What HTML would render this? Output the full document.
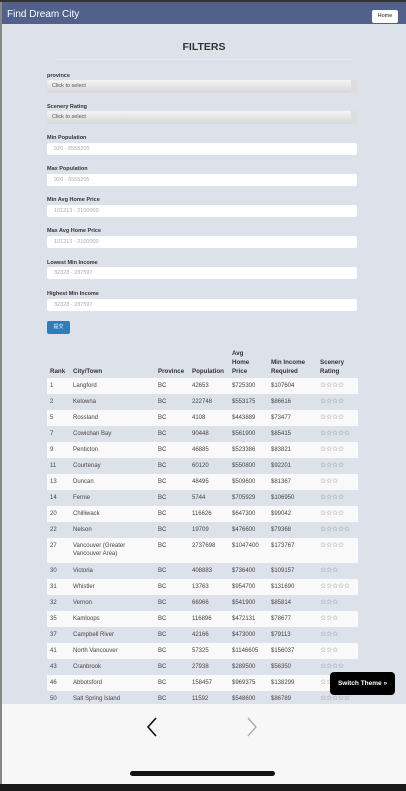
<!DOCTYPE html>
<html><head><meta charset="utf-8"><style>
*{box-sizing:border-box;margin:0;padding:0}
body{width:406px;height:791px;overflow:hidden;background:#1a1a1a;font-family:"Liberation Sans",Arial,sans-serif;position:relative}
.frame{position:absolute;left:0;top:0;width:406px;height:784px;background:#f7f7f7;border-left:2px solid #888;}
.top{position:absolute;left:0;top:0;width:406px;height:2px;background:#333}
.nav{position:absolute;left:2px;top:2px;width:404px;height:22px;background:#52618b;}
.nav .t{position:absolute;left:5px;top:7px;color:#fff;font-size:10px}
.nav .h{position:absolute;left:370px;top:8px;width:26px;height:13px;background:#fff;border-radius:2px;font-size:5.5px;text-align:center;line-height:13px;color:#222}
.content{position:absolute;left:2px;top:24px;width:404px;height:680px;background:#dde1ea;overflow:hidden}
h1{position:absolute;left:0;width:404px;top:17px;text-align:center;font-size:10.5px;font-weight:bold;color:#333}
.hr{position:absolute;left:54px;width:296px;top:35px;border-top:1px solid #e9ecf2}
.lab{position:absolute;left:45px;font-size:5.5px;font-weight:bold;color:#333}
.sel{position:absolute;left:45px;width:310px;height:13px;background:linear-gradient(#f4f4f4,#d6d6d6);border-radius:2px;font-size:5.5px;color:#555;padding:3px 0 0 5px}
.sel:after{content:"";position:absolute;right:0;top:0;width:6px;height:13px;background:#ddd}
.inp{position:absolute;left:45px;width:310px;height:12px;background:#fff;border-radius:2px;font-size:5.5px;color:#aaa;padding:3px 0 0 7px}
.btn{position:absolute;left:45px;top:297px;width:23px;height:13px;background:#337ab7;border-radius:2px;color:#dfe;font-size:5px;text-align:center;line-height:13px}
table{position:absolute;left:45px;top:325px;width:311px;border-collapse:collapse;font-size:6px;color:#444}
th{font-weight:bold;text-align:left;vertical-align:bottom;color:#333;padding:0 3px 2px 3px;line-height:9px;font-size:6.2px}
td{padding:0 3px;height:16px;vertical-align:middle;line-height:8px}
tr.o td{background:#f9f9f9}
.st{color:#777;letter-spacing:-.3px;font-size:7px}
.sw{position:absolute;left:330px;top:672px;width:65px;height:23px;background:#000;border-radius:4px;color:#fff;font-size:6.5px;font-weight:bold;text-align:center;line-height:23px}
.bar{position:absolute;left:130px;top:771px;width:145px;height:5px;background:#111;border-radius:3px}
</style></head><body>
<div class="frame"></div><div class="top"></div>
<div class="nav"><div class="t">Find Dream City</div><div class="h">Home</div></div>
<div class="content">
<h1>FILTERS</h1><div class="hr"></div>
<div class="lab" style="top:49px">province</div><div class="sel" style="top:56px">Click to select</div>
<div class="lab" style="top:80px">Scenery Rating</div><div class="sel" style="top:87px">Click to select</div>
<div class="lab" style="top:111px">Min Population</div><div class="inp" style="top:119px">920 - 6555205</div>
<div class="lab" style="top:142px">Max Population</div><div class="inp" style="top:150px">920 - 6555205</div>
<div class="lab" style="top:173px">Min Avg Home Price</div><div class="inp" style="top:181px">101213 - 2100000</div>
<div class="lab" style="top:204px">Max Avg Home Price</div><div class="inp" style="top:212px">101213 - 2100000</div>
<div class="lab" style="top:236px">Lowest Min Income</div><div class="inp" style="top:243px">32328 - 287597</div>
<div class="lab" style="top:267px">Highest Min Income</div><div class="inp" style="top:275px">32328 - 287597</div>
<div class="btn">提交</div>
<table>
<tr><th style="width:23px">Rank</th><th style="width:85px">City/Town</th><th style="width:34px">Province</th><th style="width:40px">Population</th><th style="width:39px">Avg<br>Home<br>Price</th><th style="width:49px">Min Income<br>Required</th><th>Scenery<br>Rating</th></tr>
<tr class="o"><td>1</td><td>Langford</td><td>BC</td><td>42653</td><td>$725300</td><td>$107604</td><td class="st">☆☆☆☆</td></tr>
<tr><td>2</td><td>Kelowna</td><td>BC</td><td>222748</td><td>$553175</td><td>$86616</td><td class="st">☆☆☆☆</td></tr>
<tr class="o"><td>5</td><td>Rossland</td><td>BC</td><td>4108</td><td>$443889</td><td>$73477</td><td class="st">☆☆☆☆</td></tr>
<tr><td>7</td><td>Cowichan Bay</td><td>BC</td><td>90448</td><td>$561900</td><td>$85415</td><td class="st">☆☆☆☆☆</td></tr>
<tr class="o"><td>9</td><td>Penticton</td><td>BC</td><td>46885</td><td>$523386</td><td>$83821</td><td class="st">☆☆☆☆</td></tr>
<tr><td>11</td><td>Courtenay</td><td>BC</td><td>60120</td><td>$550800</td><td>$92201</td><td class="st">☆☆☆☆</td></tr>
<tr class="o"><td>13</td><td>Duncan</td><td>BC</td><td>48495</td><td>$509600</td><td>$81367</td><td class="st">☆☆☆</td></tr>
<tr><td>14</td><td>Fernie</td><td>BC</td><td>5744</td><td>$705929</td><td>$106950</td><td class="st">☆☆☆☆</td></tr>
<tr class="o"><td>20</td><td>Chilliwack</td><td>BC</td><td>116626</td><td>$647300</td><td>$99042</td><td class="st">☆☆☆☆</td></tr>
<tr><td>22</td><td>Nelson</td><td>BC</td><td>19709</td><td>$476600</td><td>$79368</td><td class="st">☆☆☆☆☆</td></tr>
<tr class="o"><td style="height:25px;vertical-align:top;padding-top:4px">27</td><td style="vertical-align:top;padding-top:4px">Vancouver (Greater Vancouver Area)</td><td style="vertical-align:top;padding-top:4px">BC</td><td style="vertical-align:top;padding-top:4px">2737698</td><td style="vertical-align:top;padding-top:4px">$1047400</td><td style="vertical-align:top;padding-top:4px">$173767</td><td class="st" style="vertical-align:top;padding-top:4px">☆☆☆☆</td></tr>
<tr><td>30</td><td>Victoria</td><td>BC</td><td>408883</td><td>$736400</td><td>$109157</td><td class="st">☆☆☆</td></tr>
<tr class="o"><td>31</td><td>Whistler</td><td>BC</td><td>13763</td><td>$954700</td><td>$131690</td><td class="st">☆☆☆☆☆</td></tr>
<tr><td>32</td><td>Vernon</td><td>BC</td><td>66966</td><td>$541900</td><td>$85814</td><td class="st">☆☆☆</td></tr>
<tr class="o"><td>35</td><td>Kamloops</td><td>BC</td><td>116896</td><td>$472131</td><td>$78677</td><td class="st">☆☆☆</td></tr>
<tr><td>37</td><td>Campbell River</td><td>BC</td><td>42166</td><td>$473000</td><td>$79113</td><td class="st">☆☆☆</td></tr>
<tr class="o"><td>41</td><td>North Vancouver</td><td>BC</td><td>57325</td><td>$1146605</td><td>$156037</td><td class="st">☆☆☆</td></tr>
<tr><td>43</td><td>Cranbrook</td><td>BC</td><td>27938</td><td>$289500</td><td>$56350</td><td class="st">☆☆☆☆</td></tr>
<tr class="o"><td>46</td><td>Abbotsford</td><td>BC</td><td>158457</td><td>$969375</td><td>$138299</td><td class="st">☆☆☆</td></tr>
<tr><td>50</td><td>Salt Spring Island</td><td>BC</td><td>11592</td><td>$548600</td><td>$86789</td><td class="st">☆☆☆☆☆</td></tr>
</table>
</div>
<div class="sw">Switch Theme »</div>
<svg style="position:absolute;left:145px;top:716px" width="14" height="22"><path d="M11 2 L3 11 L11 20" fill="none" stroke="#111" stroke-width="1.6"/></svg>
<svg style="position:absolute;left:245px;top:716px" width="14" height="22"><path d="M3 2 L11 11 L3 20" fill="none" stroke="#aaa" stroke-width="1.4"/></svg>
<div class="bar"></div>
</body></html>
